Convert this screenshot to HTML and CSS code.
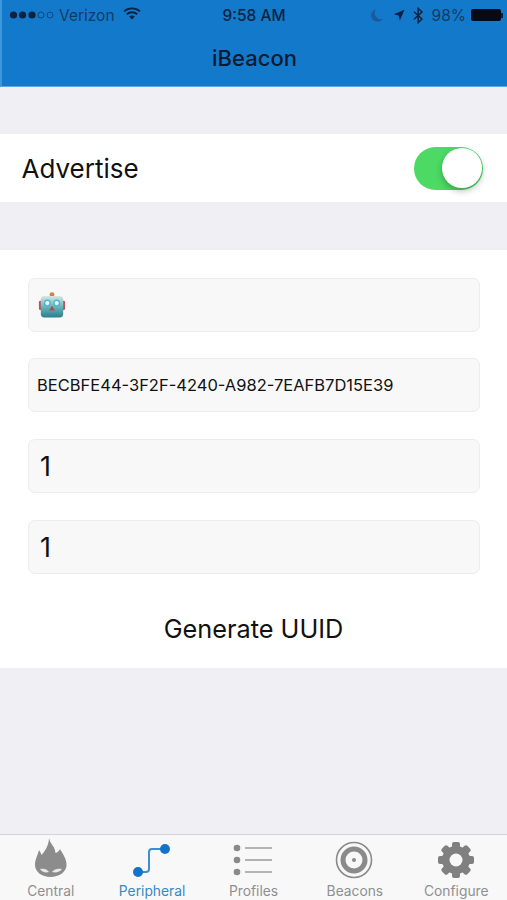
FILE: index.html
```html
<!DOCTYPE html>
<html lang="en">
<head>
<meta charset="utf-8">
<title>iBeacon</title>
<link rel="stylesheet" href="styles.css">
</head>
<body>
<div class="screen">
  <header class="header">
    <div class="status">
      <div class="status-side">
        <svg class="signal" width="46" height="10" viewBox="0 0 46 10"><circle cx="4.500" cy="5" r="3.600" fill="#0b2240"/><circle cx="13.500" cy="5" r="3.600" fill="#0b2240"/><circle cx="23" cy="5" r="3.600" fill="#0b2240"/><circle cx="32" cy="5" r="3" fill="none" stroke="#0b3a70" stroke-width=".8"/><circle cx="41" cy="5" r="3" fill="none" stroke="#0b3a70" stroke-width=".8"/></svg>
        <span class="carrier">Verizon</span>
        <svg class="wifi" width="18" height="13" viewBox="0 0 18 13"><path d="M1 4.400C5.600.3 12.400.3 17 4.400M3.700 7.200c3-2.600 7.600-2.600 10.600 0" fill="none" stroke="#0b2240" stroke-width="1.800"/><path d="M6.200 9.400c1.600-1.300 4-1.300 5.600 0L9 12.600z" fill="#0b2240"/></svg>
      </div>
      <div class="time">9:58 AM</div>
      <div class="status-side status-right">
        <svg class="moon" width="14" height="14" viewBox="0 0 12 12"><path d="M5 1a5.500 5.500 0 0 0 6 8.400A5.500 5.500 0 1 1 5 1z" fill="#1c5a9c"/></svg>
        <svg class="arrow" width="12" height="12" viewBox="0 0 12 12"><path d="M11.500.8 6.800 11.400 5.600 6.400.8 5.200z" fill="#0b2240"/></svg>
        <svg class="bt" width="11" height="17" viewBox="0 0 11 17"><path d="M1 4.800 9 12 5.200 15.500V1.500L9 5 1 12.200" fill="none" stroke="#0b2240" stroke-width="1.500"/></svg>
        <span class="battery-text">98%</span>
        <div class="battery"></div>
        <div class="battery-tip"></div>
      </div>
    </div>
    <div class="nav">iBeacon</div>
  </header>

  <main class="main">
    <section class="advertise">
      <span class="advertise-label">Advertise</span>
      <div class="switch"><div class="knob"></div></div>
    </section>
    <section class="form">
      <div class="field">
        <svg class="robot" width="28" height="29" viewBox="0 0 30 30">
          <defs><linearGradient id="face" x1="0" y1="0" x2="0" y2="1"><stop offset="0" stop-color="#d5e6e4"/><stop offset=".55" stop-color="#62aeb5"/><stop offset="1" stop-color="#2a7d8c"/></linearGradient></defs>
          <circle cx="15" cy="4.500" r="2.600" fill="#d9803a"/>
          <rect x="1" y="11" width="4" height="10" rx="1.500" fill="#b5545c"/>
          <rect x="25" y="11" width="4" height="10" rx="1.500" fill="#b5545c"/>
          <rect x="3" y="6" width="24" height="23" rx="4" fill="url(#face)"/>
          <circle cx="10" cy="13.500" r="3" fill="#e8fbfd" stroke="#49b9cf" stroke-width="1.500"/>
          <circle cx="20" cy="13.500" r="3" fill="#e8fbfd" stroke="#49b9cf" stroke-width="1.500"/>
          <path d="M15 16 18 21.500H12z" fill="#a8505a"/>
        </svg>
      </div>
      <div class="field field-uuid">BECBFE44-3F2F-4240-A982-7EAFB7D15E39</div>
      <div class="field field-num">1</div>
      <div class="field field-num">1</div>
      <div class="generate">Generate UUID</div>
    </section>
  </main>

  <nav class="tabs">
    <div class="tab">
      <svg class="tab-icon" width="36" height="43" viewBox="0 0 36 43">
        <path d="M16 2C17 8 22 10 22.500 17 24.500 16.500 26 15 27 13 30 18 33.500 23 33.500 29 33.500 36 26 41 17.500 41S2 36 2 29C2 23 5 19 6 14 7 15.500 8 17 8.500 19 12 15 16 9 16 2z" fill="#8c8c8c"/>
        <path d="M7 33C11 32 14 33 16 36 12 37 9 36 7 33zM29 33C25 32 21 33 19 36 23 37 27 36 29 33z" fill="#e8e8e8"/>
      </svg>
      <span class="tab-label">Central</span>
    </div>
    <div class="tab tab-active">
      <svg class="tab-icon" width="40" height="38" viewBox="0 0 40 38">
        <path d="M7 31H14Q17 31 17 28V11Q17 8 20 8H32" fill="none" stroke="#3d8fd0" stroke-width="2"/>
        <circle cx="6" cy="31" r="5" fill="#1273c8"/>
        <circle cx="33" cy="8" r="5" fill="#1273c8"/>
      </svg>
      <span class="tab-label">Peripheral</span>
    </div>
    <div class="tab">
      <svg class="tab-icon" width="40" height="38" viewBox="0 0 40 38">
        <g fill="#8a8a8a"><circle cx="4" cy="7" r="3.300"/><circle cx="4" cy="19" r="3.300"/><circle cx="4" cy="31" r="3.300"/></g>
        <g stroke="#9a9a9a" stroke-width="1.500"><path d="M12 7H39M12 19H39M12 31H39"/></g>
      </svg>
      <span class="tab-label">Profiles</span>
    </div>
    <div class="tab">
      <svg class="tab-icon tab-icon-beacon" width="38" height="38" viewBox="0 0 38 38">
        <circle cx="19" cy="19" r="17.500" fill="none" stroke="#8a8a8a" stroke-width="1.600"/>
        <circle cx="19" cy="19" r="11" fill="none" stroke="#8a8a8a" stroke-width="5"/>
        <circle cx="19" cy="19" r="2" fill="#8a8a8a"/>
      </svg>
      <span class="tab-label">Beacons</span>
    </div>
    <div class="tab">
      <svg class="tab-icon" width="38" height="38" viewBox="0 0 38 38">
        <g fill="#808080"><circle cx="19" cy="19" r="14"/>
        <g><rect x="15" y="1" width="8" height="36" rx="2"/><rect x="15" y="1" width="8" height="36" rx="2" transform="rotate(45 19 19)"/><rect x="15" y="1" width="8" height="36" rx="2" transform="rotate(90 19 19)"/><rect x="15" y="1" width="8" height="36" rx="2" transform="rotate(135 19 19)"/></g></g>
        <circle cx="19" cy="19" r="6.500" fill="#f8f8f9"/>
      </svg>
      <span class="tab-label">Configure</span>
    </div>
  </nav>
</div>
</body>
</html>
```
FILE: styles.css
```css
* { box-sizing: border-box; }
html, body { margin: 0; padding: 0; }
body { font-family: Inter, "Liberation Sans", sans-serif; background: #efeff4; }
.screen { width: 507px; height: 900px; display: flex; flex-direction: column; overflow: hidden; background: #efeff4; }

.header { height: 87px; flex: none; background: #137acb; color: #0b2240; border-left: 2px solid #3d97d8; border-bottom: 1px solid #5aa9e0; }
.status { height: 30px; display: grid; grid-template-columns: 1fr auto 1fr; align-items: center; padding: 0 4px 0 7px; }
.status-side { display: flex; align-items: center; }
.status-right { justify-content: flex-end; }
.signal { margin-right: 4px; }
.carrier { font-size: 15.500px; color: #123a68; }
.wifi { margin-left: 8px; margin-bottom: 3px; }
.time { font-size: 15.500px; font-weight: 500; margin-left: -4px; }
.moon { margin-right: 9px; }
.arrow { margin-right: 8px; }
.bt { margin-right: 8px; }
.battery-text { font-size: 15.500px; color: #123a68; margin-right: 5px; }
.battery { width: 30px; height: 12px; background: #040a18; border-radius: 2px; }
.battery-tip { width: 2px; height: 5px; background: #0b2240; }
.nav { height: 56px; display: flex; align-items: center; justify-content: center; font-size: 22px; font-weight: 500; color: #0a1a30; }

.main { flex: 1; display: flex; flex-direction: column; padding-top: 47px; }
.advertise { height: 68px; background: #fff; display: flex; align-items: center; justify-content: space-between; padding: 0 24px 0 21.500px; }
.advertise-label { font-size: 26px; color: #111; }
.switch { width: 69px; height: 43px; border-radius: 22px; background: #4cd964; display: flex; justify-content: flex-end; align-items: center; padding-right: 1px; }
.knob { width: 40px; height: 40px; border-radius: 50%; background: #fff; box-shadow: 0 3px 6px rgba(0,0,0,.25); }

.form { margin-top: 48px; height: 418px; background: #fff; padding: 27.600px 27px 0 28px; display: flex; flex-direction: column; gap: 26.700px; }
.field { height: 54px; flex: none; background: #f8f8f9; border: 1px solid #ececef; border-radius: 7px; display: flex; align-items: center; padding-left: 9px; color: #111; }
.field-uuid { font-size: 16.500px; padding-left: 8px; }
.field-num { font-size: 27px; padding-left: 11px; padding-top: 1px; }
.generate { font-size: 25.300px; text-align: center; color: #111; margin-top: 13px; margin-right: 1px; }

.tabs { height: 66px; flex: none; background: #f8f8f9; border-top: 1px solid #d4d4d7; display: grid; grid-template-columns: repeat(5, 1fr); }
.tab { display: flex; flex-direction: column; align-items: center; justify-content: flex-end; color: #8f8f92; }
.tab-icon { display: block; margin-bottom: 4px; }
.tab-icon-beacon { margin-right: 2px; }
.tab-label { font-size: 13.800px; line-height: 17px; }
.tab-active { color: #3a86c8; }
```
